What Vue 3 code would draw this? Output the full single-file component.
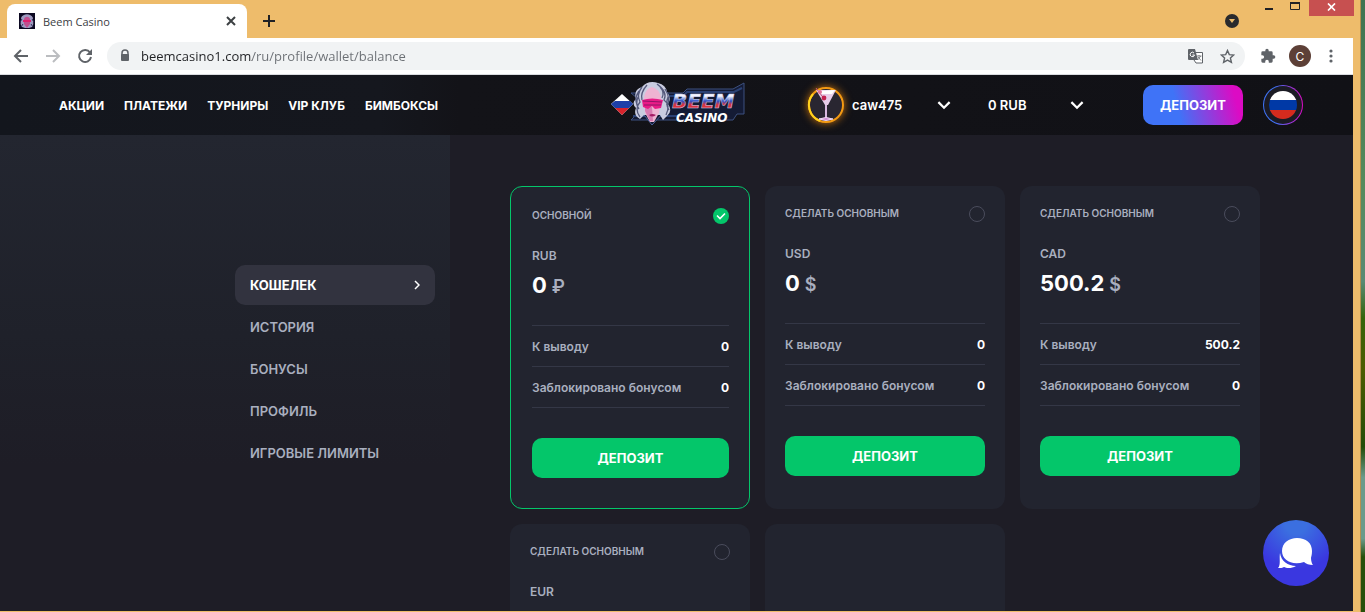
<template>
  <div class="desktop">
    <div class="window">
      <div class="tab-bar">
        <div class="tab">
          <svg class="favicon" viewBox="0 0 16 16" aria-hidden="true">
            <rect width="16" height="16" fill="#0b0820" />
            <path d="M3 14C0 10 3 8 2 5C4 0 12 0 14 5C13 8 16 10 13 14L10 15H6Z" fill="#9e9ac0" />
            <path d="M5 6C6 3 10 3 11 6V11L8 15L5 11Z" fill="#c0508f" />
            <path d="M4 7H12V9H4Z" fill="#e0206f" />
            <path d="M3 6L1 9M13 6L15 9M4 11L2 14M12 11L14 14" stroke="#35305a" />
          </svg>
          <span class="tab-title">Beem Casino</span>
          <button class="plain" aria-label="Закрыть вкладку">
            <svg width="10" height="10" viewBox="0 0 10 10"><path d="M1 1L9 9M9 1L1 9" stroke="#3c4043" stroke-width="2" /></svg>
          </button>
        </div>
        <button class="plain new-tab" aria-label="Новая вкладка">
          <svg width="12" height="12" viewBox="0 0 12 12"><path d="M6 0V12M0 6H12" stroke="#202124" stroke-width="2" /></svg>
        </button>
        <button class="plain tab-search" aria-label="Поиск вкладок">
          <svg width="14" height="14" viewBox="0 0 14 14"><circle cx="7" cy="7" r="7" fill="#292a2d" /><path d="M4 5H10L7 9Z" fill="#eebc6b" /></svg>
        </button>
        <div class="win-controls">
          <button class="plain" aria-label="Свернуть"><svg width="10" height="14"><path d="M1 9H9" stroke="#202124" stroke-width="2" /></svg></button>
          <button class="plain" aria-label="Развернуть"><svg width="11" height="14"><path d="M.5 3V9.500H9.500V3Z" fill="none" stroke="#202124" /><path d="M0 3H10" stroke="#202124" stroke-width="2" /></svg></button>
          <button class="plain win-close" aria-label="Закрыть"><svg width="9" height="8" viewBox="0 0 9 8"><path d="M1 .5L8 7.500M8 .5L1 7.500" stroke="#fff" stroke-width="1.700" /></svg></button>
        </div>
      </div>

      <div class="toolbar">
        <button class="plain" aria-label="Назад">
          <svg width="16" height="16" viewBox="0 0 16 16"><path d="M15 8H2M8 2L2 8L8 14" fill="none" stroke="#5f6368" stroke-width="2" /></svg>
        </button>
        <button class="plain" aria-label="Вперёд">
          <svg width="16" height="16" viewBox="0 0 16 16"><path d="M1 8H14M8 2L14 8L8 14" fill="none" stroke="#bbbdc0" stroke-width="2" /></svg>
        </button>
        <button class="plain" aria-label="Обновить">
          <svg width="16" height="16" viewBox="0 0 16 16"><path d="M13 4.500A6 6 0 1 0 14 9" fill="none" stroke="#5f6368" stroke-width="2" /><path d="M15 1V7H9Z" fill="#5f6368" /></svg>
        </button>
        <div class="address">
          <svg width="10" height="14" viewBox="0 0 10 14"><path d="M2 6V4a3 3 0 0 1 6 0v2" fill="none" stroke="#5f6368" stroke-width="1.500" /><rect x="1" y="5" width="8" height="7" rx="1" fill="#5f6368" /></svg>
          <input v-model="url" class="url" type="text" aria-label="Адрес" />
          <button class="plain" aria-label="Перевести">
            <svg width="15" height="15" viewBox="0 0 15 15">
              <path d="M6 3.500H14.500V14H8L6 11" fill="#fff" stroke="#5f6368" />
              <path d="M1 0H7L10 11H1Q0 11 0 10V1Q0 0 1 0Z" fill="#5f6368" />
              <path d="M6 4A2.200 2.200 0 1 0 6.500 6H4.500" fill="none" stroke="#fff" />
              <path d="M9 7H13.500M11 6V7M12.500 7Q11 10 9.500 11M10 8L13 11.500" fill="none" stroke="#5f6368" stroke-width=".8" />
            </svg>
          </button>
          <button class="plain" aria-label="Добавить в закладки">
            <svg width="15" height="15" viewBox="0 0 15 15"><path d="M7.500 1.500L9.300 5.600L13.700 6L10.400 9L11.400 13.400L7.500 11.100L3.600 13.400L4.600 9L1.300 6L5.700 5.600Z" fill="none" stroke="#5f6368" stroke-width="1.400" /></svg>
          </button>
        </div>
        <button class="plain" aria-label="Расширения">
          <svg width="16" height="16" viewBox="0 0 24 24"><path fill="#5f6368" d="M20.500 11H19V7a2 2 0 0 0-2-2h-4V3.500a2.500 2.500 0 0 0-5 0V5H4a2 2 0 0 0-2 2v3.800h1.500a2.700 2.700 0 0 1 0 5.400H2V20a2 2 0 0 0 2 2h3.800v-1.500a2.700 2.700 0 0 1 5.400 0V22H17a2 2 0 0 0 2-2v-4h1.500a2.500 2.500 0 0 0 0-5z" /></svg>
        </button>
        <button class="account">C</button>
        <button class="plain" aria-label="Меню">
          <svg width="4" height="14"><g fill="#5f6368"><circle cx="2" cy="2" r="1.600" /><circle cx="2" cy="7" r="1.600" /><circle cx="2" cy="12" r="1.600" /></g></svg>
        </button>
      </div>

      <header class="header">
        <nav class="nav">
          <a v-for="item in nav" :key="item" href="#">{{ item }}</a>
        </nav>
        <a class="logo" href="#" aria-label="Beem Casino">
          <svg width="134" height="46" viewBox="0 0 134 46">
            <path d="M20 11H72L76 7H122L133 1V32H126L122 38H20L26 32V16Z" fill="#141b35" stroke="#3d5180" />
            <path d="M26 14H72L76 10H123L131 6M22 34H70" fill="none" stroke="#2b4174" stroke-width="2" />
            <path d="M30 29L41 43L54 29Z" fill="#11182f" stroke="#4c639b" />
            <path d="M0 22L11 12L22 22L11 33Z" fill="#fff" />
            <path d="M4 19H19L22 22L18 26H4L0 22Z" fill="#1d3fa8" />
            <path d="M4 26H18L11 33Z" fill="#d8232c" />
            <path d="M29 37Q22 33 25 26Q20 21 25 17Q22 8 31 5Q37-2 47 1Q55 3 56 10Q61 16 57 22Q62 29 56 34L52 38L49 33H33Z" fill="#c9cce0" />
            <path d="M31 5Q25 13 29 20Q23 27 29 35M36 3Q29 11 31 18M46 2Q57 10 53 18Q60 23 55 33M49 5Q54 10 51 16M27 15Q24 22 28 27M57 15Q54 22 58 28M28 9Q23 16 26 23M54 7Q60 16 56 24" fill="none" stroke="#555a7c" stroke-width="1.300" />
            <path d="M33 15Q35 6 41 5Q48 7 50 15L48 31L43 40H39L34 31Z" fill="#eeb3d2" />
            <path d="M34 29L39 39H42L41 25L34 22Z" fill="#d87bb2" />
            <path d="M31 18Q41 15 52 18L50 26L44 27L41 24L37 27L32 25Z" fill="#e91b87" />
            <path d="M32 19L51 20M33 23H50" stroke="#8f1467" />
            <path d="M38 33Q41 31 45 33Q41 36 38 33Z" fill="#a51b65" />
            <defs>
              <linearGradient id="beem" x1="0" y1="0" x2="0" y2="1">
                <stop offset=".3" stop-color="#f5f5ff" />
                <stop offset=".5" stop-color="#2b52c8" />
                <stop offset=".65" stop-color="#d8343f" />
              </linearGradient>
            </defs>
            <text x="61" y="26" class="logo-beem">BEEM</text>
            <text x="65" y="40" class="logo-casino">CASINO</text>
          </svg>
        </a>
        <div class="header-right">
          <button class="dropdown user">
            <svg class="avatar" width="40" height="40" viewBox="0 0 40 40" aria-hidden="true">
              <circle cx="20" cy="20" r="17" fill="#292631" stroke="#f39a13" stroke-width="2" />
              <path d="M7 9A17 17 0 0 0 14 36" fill="none" stroke="#ffd21d" stroke-width="2" />
              <path d="M10 5H30L22 20H19Z" fill="#e7cde9" />
              <path d="M12 6L29 5L26 9H14Z" fill="#fff" />
              <path d="M20 20V33" stroke="#d8b9df" stroke-width="2" />
              <path d="M13 34Q20 31 27 34Q20 37 13 34Z" fill="#c98ad0" stroke="#f0d9f3" />
              <path d="M10 3L19 15" stroke="#c05078" />
              <circle cx="18" cy="13" r="2.400" fill="#c32250" />
              <circle cx="14" cy="7" r="2" fill="#e07398" />
            </svg>
            <span class="user-name">caw475</span>
            <svg class="chevron" viewBox="0 0 12 8"><path d="M1 1L6 6L11 1" /></svg>
          </button>
          <label class="dropdown currency">
            <select v-model="currency" aria-label="Валюта">
              <option>0 RUB</option>
              <option>0 USD</option>
              <option>500.2 CAD</option>
            </select>
            <svg class="chevron" viewBox="0 0 12 8"><path d="M1 1L6 6L11 1" /></svg>
          </label>
          <button class="deposit-top">ДЕПОЗИТ</button>
          <button class="lang" aria-label="Русский"><span class="flag"></span></button>
        </div>
      </header>

      <main class="page">
        <aside class="sidebar">
          <nav class="menu">
            <a v-for="(item, i) in menu" :key="item" href="#" :class="{ active: i === 0 }">
              {{ item }}
              <svg v-if="i === 0" width="6" height="10" viewBox="0 0 6 10"><path d="M1 1L5 5L1 9" fill="none" stroke="#fff" stroke-width="1.500" /></svg>
            </a>
          </nav>
        </aside>
        <section class="wallets">
          <div v-for="w in wallets" :key="w.code" class="card" :class="{ selected: w.code === selected }">
            <label class="card-head">
              <span>{{ w.code === selected ? 'ОСНОВНОЙ' : 'СДЕЛАТЬ ОСНОВНЫМ' }}</span>
              <input v-model="selected" type="radio" name="wallet" :value="w.code" />
            </label>
            <div class="code">{{ w.code }}</div>
            <div class="amount">{{ w.amount }}<span>{{ w.sign }}</span></div>
            <dl class="rows">
              <div><dt>К выводу</dt><dd>{{ w.amount }}</dd></div>
              <div><dt>Заблокировано бонусом</dt><dd>0</dd></div>
            </dl>
            <button class="deposit">ДЕПОЗИТ</button>
          </div>
          <div class="card"></div>
        </section>
        <button class="chat" aria-label="Чат">
          <svg width="36" height="34" viewBox="0 0 36 34">
            <path d="M19 2C28 2 34 7 34 15C34 19 33 21 33 22C33 25 34 28 35 29C31 29 28 28 26 26C14 30 4 24 4 15C4 7 11 2 19 2Z" fill="#fff" />
            <path d="M2 17C3 25 10 30 18 30C13 33 8 32 6 31C5 32 2 32 0 32C3 29 1 22 2 17Z" fill="#fff" />
          </svg>
        </button>
      </main>
    </div>
  </div>
</template>

<script setup>
import { ref } from 'vue';

const url = ref('beemcasino1.com/ru/profile/wallet/balance');
const currency = ref('0 RUB');
const selected = ref('RUB');

const nav = ['АКЦИИ', 'ПЛАТЕЖИ', 'ТУРНИРЫ', 'VIP КЛУБ', 'БИМБОКСЫ'];
const menu = ['КОШЕЛЕК', 'ИСТОРИЯ', 'БОНУСЫ', 'ПРОФИЛЬ', 'ИГРОВЫЕ ЛИМИТЫ'];

const wallets = [
  { code: 'RUB', amount: '0', sign: '₽' },
  { code: 'USD', amount: '0', sign: '$' },
  { code: 'CAD', amount: '500.2', sign: '$' },
  { code: 'EUR', amount: '0', sign: '€' },
];
</script>

<style>
body {
  margin: 0;
  overflow: hidden;
}
</style>

<style scoped>
* {
  box-sizing: border-box;
}

button {
  font-family: inherit;
  border: 0;
  padding: 0;
  cursor: pointer;
}

svg {
  display: block;
  flex-shrink: 0;
}

a {
  color: inherit;
  text-decoration: none;
}

.plain {
  background: none;
}

.desktop {
  height: 100vh;
  padding-right: 4px;
  background: linear-gradient(#3f7350, #568a5c 30%, #5a8a74 46%, #35640a 52%, #4d5c00 60%, #244c08 73%, #6b9a8a 78%, #6b9a8a 88%, #27500a 91%);
}

.window {
  display: flex;
  flex-direction: column;
  height: 100%;
  background: #eebc6b;
  border-right: 1px solid #b78e4d;
  padding: 0 7px 1px 0;
  font-family: Inter, "Noto Sans", sans-serif;
}

/* Браузер */
.tab-bar {
  display: flex;
  height: 38px;
  flex-shrink: 0;
  margin-right: -1px;
  font-family: "Open Sans", sans-serif;
}

.tab {
  display: flex;
  align-items: center;
  width: 240px;
  height: 34px;
  margin: 4px 0 0 7px;
  padding: 0 11px 0 12px;
  border-radius: 8px 8px 0 0;
  background: #fff;
}

.favicon {
  width: 16px;
  height: 16px;
}

.tab-title {
  flex: 1;
  margin-left: 8px;
  font-size: 11px;
  color: #3c4043;
}

.new-tab {
  margin: 4px 0 0 16px;
}

.tab-search {
  margin: 4px 25px 0 auto;
}

.win-controls {
  display: flex;
  align-items: flex-start;
  gap: 16px;
}

.win-close {
  display: flex;
  align-items: center;
  justify-content: center;
  width: 45px;
  height: 16px;
  margin-left: -8px;
  padding-bottom: 2px;
  background: #c75050;
}

.toolbar {
  display: flex;
  align-items: center;
  gap: 16px;
  height: 37px;
  flex-shrink: 0;
  padding: 0 20px 0 13px;
  background: #fff;
  border-bottom: 1px solid #dadce0;
}

.address {
  display: flex;
  flex: 1;
  align-items: center;
  gap: 17px;
  height: 28px;
  margin: 0 -1px 0 -2px;
  padding: 0 10px 0 13px;
  border-radius: 14px;
  background: #f1f3f4;
}

.url {
  flex: 1;
  min-width: 0;
  margin-left: -6px;
  padding: 0;
  border: 0;
  outline: 0;
  font-family: "Open Sans", sans-serif;
  font-size: 13px;
  color: transparent;
  background: linear-gradient(90deg, #202124 111px, #6b6f74 111px);
  background-clip: text;
}

.account {
  width: 22px;
  height: 22px;
  margin: 0 2px 0 -3px;
  border-radius: 50%;
  background: #5d4037;
  color: #fff;
  font-size: 12px;
}

/* Шапка сайта */
.header {
  display: flex;
  align-items: center;
  height: 60px;
  flex-shrink: 0;
  padding: 0 50px 0 59px;
  background: linear-gradient(90deg, #13161d, #15171e 28%, #131318 34%, #111116);
  color: #fff;
}

.nav {
  display: flex;
  flex: 1;
  gap: 20px;
  font-size: 12px;
  font-weight: 700;
  white-space: nowrap;
}

.logo {
  margin: 0 3px 0 -3px;
}

.logo-beem {
  font: italic 900 20px "DejaVu Sans", sans-serif;
  fill: url(#beem);
  stroke: #c9d0ee;
  stroke-width: 0.5px;
}

.logo-casino {
  font: italic bold 12px "DejaVu Sans", sans-serif;
  fill: #fff;
}

.header-right {
  display: flex;
  flex: 1;
  align-items: center;
  justify-content: flex-end;
}

.dropdown {
  display: flex;
  align-items: center;
  background: none;
  color: #fff;
  font-size: 13px;
  font-weight: 600;
}

.user {
  width: 145px;
}

.avatar {
  border-radius: 50%;
  filter: drop-shadow(0 0 4px #c9740b);
}

.user-name {
  margin-left: 6px;
}

.chevron {
  width: 14px;
  height: 9px;
  margin-left: auto;
  fill: none;
  stroke: #fff;
  stroke-width: 2;
  pointer-events: none;
}

.currency {
  width: 96px;
  margin: 0 59px 0 37px;
}

.currency select {
  width: 80px;
  padding: 0;
  border: 0;
  appearance: none;
  background: none;
  color: inherit;
  font: inherit;
}

.deposit-top {
  width: 100px;
  height: 40px;
  border-radius: 10px;
  background: linear-gradient(75deg, #3f73f7 35%, #dc0bc4 90%);
  color: #fff;
  font-size: 13px;
  font-weight: 700;
}

.lang {
  display: flex;
  align-items: center;
  justify-content: center;
  width: 40px;
  height: 40px;
  margin-left: 20px;
  border: 1px solid transparent;
  border-radius: 50%;
  background: linear-gradient(#1b1b24, #1b1b24) padding-box, linear-gradient(90deg, #3f73f7 30%, #dc0bc4) border-box;
}

.flag {
  width: 28px;
  height: 28px;
  border-radius: 50%;
  background: linear-gradient(#fff 33%, #0039a6 33%, #0039a6 67%, #d52b1e 67%);
}

/* Содержимое */
.page {
  position: relative;
  display: flex;
  flex: 1;
  min-height: 0;
  overflow: hidden;
  background: #1e1d26;
}

.sidebar {
  width: 450px;
  flex-shrink: 0;
  padding: 130px 15px 0 0;
  background: linear-gradient(#232630, #1f212a 200px, #1e1d26 330px);
}

.menu {
  display: flex;
  flex-direction: column;
  gap: 2px;
  width: 200px;
  margin-left: auto;
  color: #a9afbf;
  font-size: 13px;
  font-weight: 600;
}

.menu a {
  display: flex;
  align-items: center;
  justify-content: space-between;
  height: 40px;
  padding: 0 15px;
  border-radius: 10px;
  white-space: nowrap;
}

.menu .active {
  background: #32333f;
  color: #fff;
  font-weight: 700;
}

.wallets {
  display: grid;
  flex: 1;
  grid-template-columns: repeat(auto-fill, 240px);
  align-content: start;
  gap: 15px;
  padding: 51px 15px 0 60px;
}

.card {
  min-height: 323px;
  padding: 20px;
  border-radius: 12px;
  background: #22242f;
  color: #a9afbf;
}

.selected {
  padding: 21px 20px 21px 21px;
  border: 1px solid #04c66a;
}

.card-head {
  display: flex;
  justify-content: space-between;
  height: 16px;
  font-size: 10px;
  font-weight: 600;
  line-height: 14px;
}

.card-head input {
  width: 16px;
  height: 16px;
  margin: 0;
  border: 1px solid #4a4c5c;
  border-radius: 50%;
  appearance: none;
}

.card-head input:checked {
  border: 0;
  background: #04c66a url("data:image/svg+xml,%3Csvg xmlns='http://www.w3.org/2000/svg' viewBox='0 0 16 16'%3E%3Cpath d='M4 7.500l3 3 5-5' fill='none' stroke='%23fff' stroke-width='1.600'/%3E%3C/svg%3E");
}

.code {
  margin-top: 24px;
  font-size: 12px;
  font-weight: 600;
  line-height: 16px;
}

.amount {
  margin-top: 4px;
  color: #fff;
  font-size: 22px;
  font-weight: 700;
  line-height: 34px;
}

.amount span {
  margin-left: 5px;
  color: #a9afbf;
  font-size: 18px;
  font-weight: 600;
}

.rows {
  margin: 23px 0 30px;
  border-top: 1px solid #343746;
  font-size: 12px;
  font-weight: 600;
}

.amount + .rows {
  margin-top: 21px;
}

.rows div {
  display: flex;
  align-items: center;
  justify-content: space-between;
  height: 41px;
  border-bottom: 1px solid #343746;
}

.rows dd {
  margin: 0;
  color: #fff;
  font-weight: 700;
}

.deposit {
  width: 100%;
  height: 40px;
  border-radius: 10px;
  background: #04c66a;
  color: #fff;
  font-size: 13px;
  font-weight: 700;
}

.chat {
  position: absolute;
  right: 24px;
  bottom: 25px;
  display: flex;
  align-items: center;
  justify-content: center;
  width: 66px;
  height: 66px;
  border-radius: 50%;
  background: radial-gradient(circle at 50% 5%, #3b6fe0 15%, #3a37e0 65%);
}
</style>
